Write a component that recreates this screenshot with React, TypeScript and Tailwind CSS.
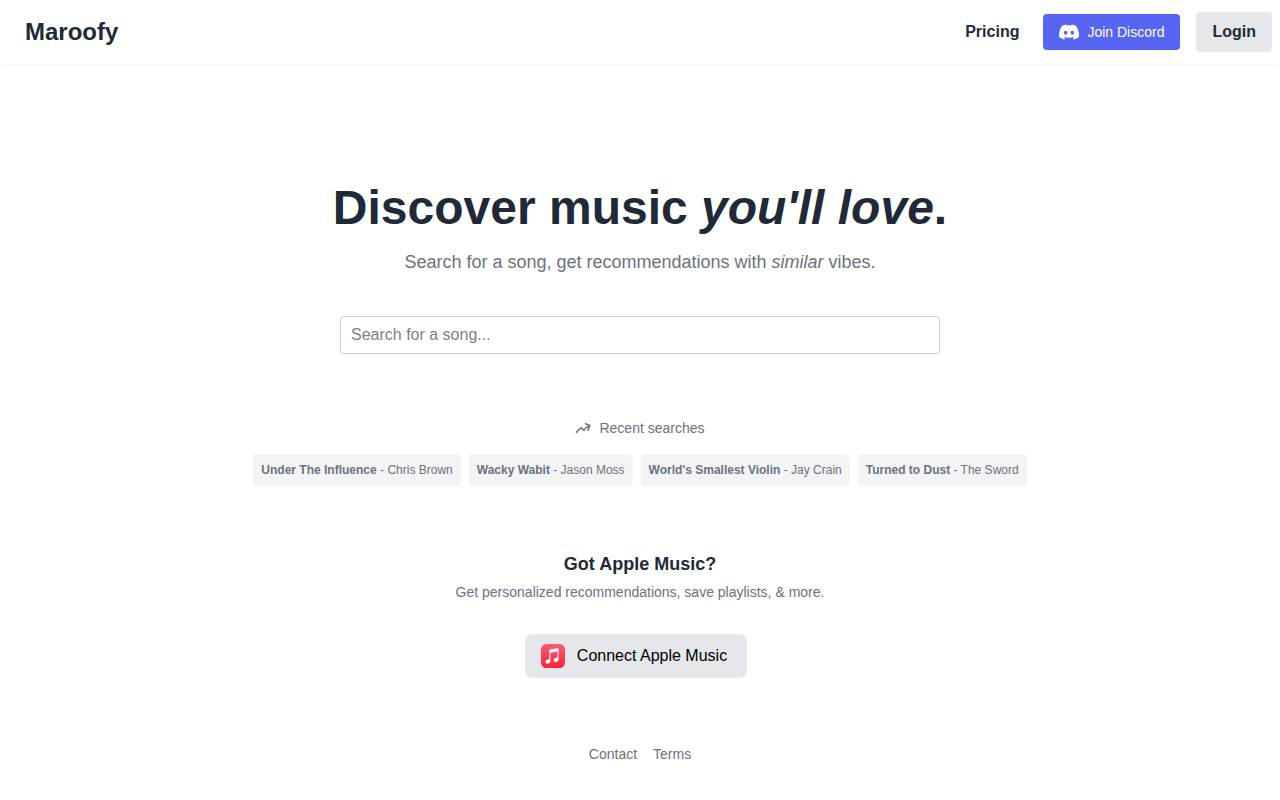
import { SiDiscord } from "react-icons/si";

const recentSearches = [
  { title: "Under The Influence", artist: "Chris Brown" },
  { title: "Wacky Wabit", artist: "Jason Moss" },
  { title: "World's Smallest Violin", artist: "Jay Crain" },
  { title: "Turned to Dust", artist: "The Sword" },
];

function TrendingIcon() {
  return (
    <svg viewBox="0 0 24 24" fill="none" stroke="currentColor" strokeWidth="2.3" className="size-4" aria-hidden="true">
      <path
        strokeLinecap="round"
        strokeLinejoin="round"
        d="M2.25 18.5L9 11.25l4.306 4.307a11.95 11.95 0 015.814-5.519l3.2-1.8m0 0l-6.6-2.6m6.6 2.6l-2.9 7.2"
      />
    </svg>
  );
}

function AppleMusicIcon() {
  return (
    <svg viewBox="0 0 24 24" className="size-6" aria-hidden="true">
      <defs>
        <linearGradient id="apple-music" x1="0" y1="0" x2="0" y2="1">
          <stop offset="0" stopColor="#fb5c74" />
          <stop offset="1" stopColor="#fa233b" />
        </linearGradient>
      </defs>
      <rect width="24" height="24" rx="5.4" fill="url(#apple-music)" />
      <path
        fill="#fff"
        d="M17 3.9 9.2 5.4c-.6.1-.9.4-.9 1v8.2c0 .6-.3.9-.8 1l-1 .2c-1.2.25-2 .9-2 2 0 1.2.85 2 2 2 1.7 0 2.85-1.25 2.85-3V9.4c0-.4.15-.6.5-.7l6-1.2c.4-.1.6.1.6.45v4.9c0 .6-.3.9-.8 1l-1 .2c-1.2.25-2 .9-2 2 0 1.2.85 2 2 2 1.7 0 2.85-1.25 2.85-3V4.600c0-.5-.3-.8-.85-.7z"
      />
    </svg>
  );
}

function NavBar() {
  return (
    <header className="flex h-16 items-center justify-between pl-[25px] pr-2 shadow-xs">
      <a href="#" className="text-2xl font-bold">Maroofy</a>

      <nav className="flex items-center gap-4">
        <a href="#pricing" className="px-2 font-bold">Pricing</a>
        <a href="#discord" className="flex h-9 items-center gap-2 rounded-sm bg-[#5865f2] px-4 text-sm text-white">
          <SiDiscord className="size-5" />
          Join Discord
        </a>
        <button type="button" className="h-10 rounded-sm bg-gray-200 px-4 font-bold">Login</button>
      </nav>
    </header>
  );
}

export default function App() {
  return (
    <div className="min-h-screen bg-white font-['Liberation_Sans',Arial,sans-serif] text-[#1f2937]">

      <NavBar />

      <main className="flex flex-col items-center px-4 pt-30 text-center">

        {/* Hero and search */}
        <h1 className="text-5xl font-bold">
          Discover music <em>you'll love</em>.
        </h1>
        <p className="mt-4 text-lg text-[#6b7280]">
          Search for a song, get recommendations with <em>similar</em> vibes.
        </p>
        <input
          type="text"
          aria-label="Search for a song"
          placeholder="Search for a song..."
          className="mt-10 h-[38px] w-full max-w-[600px] rounded-sm border border-[#cccccc] px-2.5 placeholder:text-[#808080]"
        />

        {/* Recent searches */}
        <section className="mt-16 text-[#6b7280]">
          <h2 className="flex items-center justify-center gap-2 text-sm">
            <TrendingIcon />
            Recent searches
          </h2>
          <div className="mt-4 flex flex-wrap justify-center gap-2">
            {recentSearches.map((song) => (
              <button key={song.title} type="button" className="h-8 rounded-sm bg-gray-100 px-2 text-xs">
                <span className="font-bold">{song.title}</span> - {song.artist}
              </button>
            ))}
          </div>
        </section>

        {/* Apple Music */}
        <section className="mt-16 flex flex-col items-center">
          <h2 className="text-lg font-bold">Got Apple Music?</h2>
          <p className="mt-1 text-sm text-[#6b7280]">Get personalized recommendations, save playlists, & more.</p>
          <button type="button" className="mr-2 mt-8 flex h-11 items-center gap-3 rounded-lg bg-gray-200 pl-4 pr-5 text-black">
            <AppleMusicIcon />
            Connect Apple Music
          </button>
        </section>

      </main>

      <footer className="mt-16 flex justify-center gap-4 pb-8 pt-0.5 text-sm text-[#6b7280]">
        <a href="#contact">Contact</a>
        <a href="#terms">Terms</a>
      </footer>

    </div>
  );
}
